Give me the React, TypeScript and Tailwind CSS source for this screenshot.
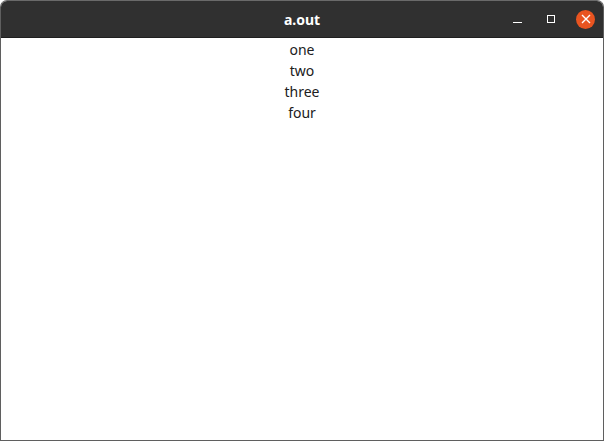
import React from "react";

export default function App() {
  return (
    <div className="w-[604px] h-[441px] bg-white" style={{ fontFamily: '"Noto Sans", "Open Sans", sans-serif' }}>
      <div className="w-full h-full flex flex-col rounded-t-[7px] border border-[#5f5f5f] border-t-[#6a6a6a] overflow-hidden">
        <div className="h-[37px] shrink-0 bg-[#303030] border-b border-[#1f1f1f] relative flex items-center justify-center">
          <span className="text-white font-bold text-[14px] text-[#f2f2f2]">a.out</span>
          <div className="absolute right-[8px] top-0 h-full flex items-center">
            <div className="w-[18px] h-[18px] flex items-center justify-center mr-[16px]">
              <div className="w-[9px] h-[1px] bg-white mt-[6px]" />
            </div>
            <div className="w-[18px] h-[18px] flex items-center justify-center mr-[16px]">
              <div className="w-[8px] h-[8px] border border-white" />
            </div>
            <div className="w-[19px] h-[19px] rounded-full bg-[#e95420] flex items-center justify-center">
              <svg width="10" height="10" viewBox="0 0 10 10">
                <path d="M1 1 L9 9 M9 1 L1 9" stroke="white" strokeWidth="1.4" />
              </svg>
            </div>
          </div>
        </div>
        <div className="flex-1 flex flex-col items-center pt-[1px] text-[14px] leading-[21px] text-[#202020]">
          <div>one</div>
          <div>two</div>
          <div>three</div>
          <div>four</div>
        </div>
      </div>
    </div>
  );
}
